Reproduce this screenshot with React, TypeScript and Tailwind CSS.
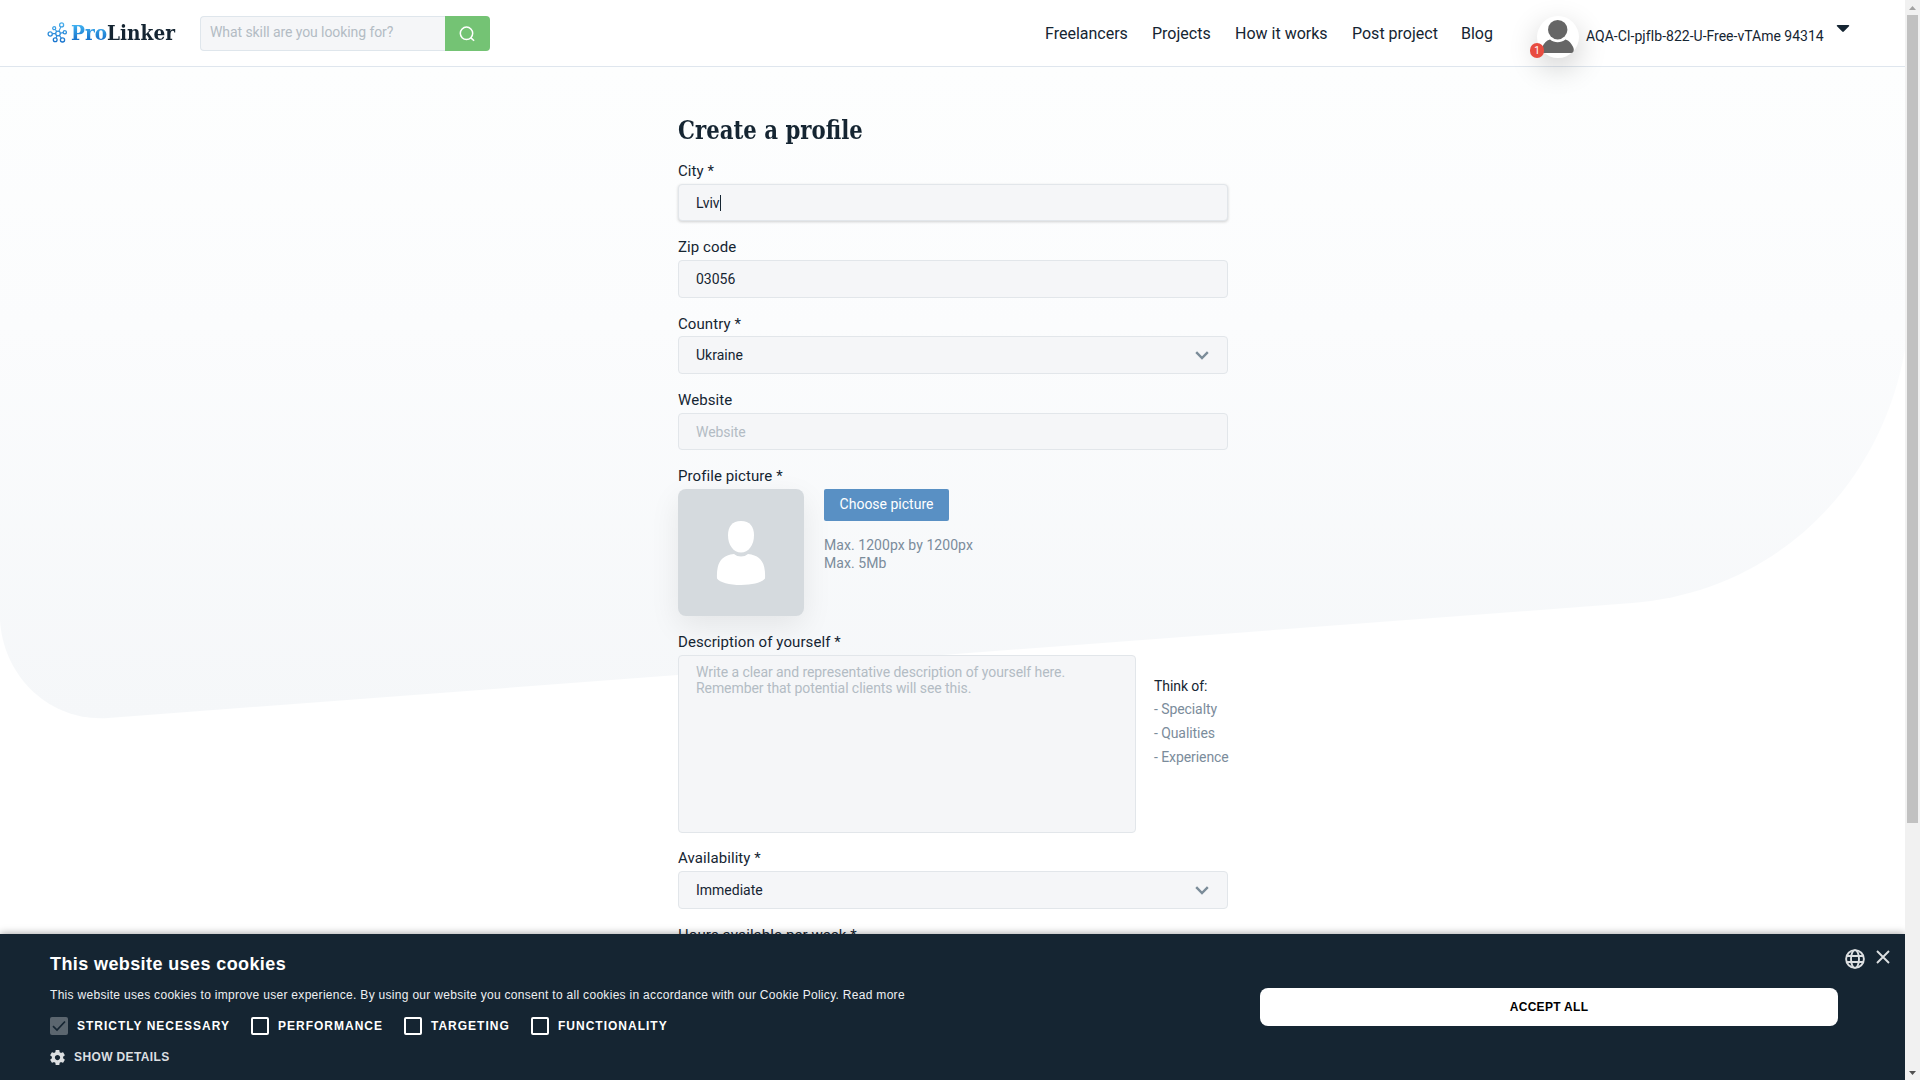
import React from "react";

const label = "text-[15px] leading-[18px] tracking-[0.08px] text-[#152532]";
const box = "flex items-center justify-between rounded border border-[#e2e6ea] bg-[#f5f6f8] w-[550px] px-[17px] text-[14px] leading-[16px]";

function Chevron() {
  return (
    <svg width="14" height="9" viewBox="0 0 14 9" className="mr-px" fill="none" stroke="#7b8c99" strokeWidth="2.4">
      <path d="M1.2 1.2 7 7l5.8-5.8" />
    </svg>
  );
}

function Logo() {
  return (
    <div className="flex items-start">
      <svg width="20" height="21" viewBox="0 0 20 21" fill="none" strokeWidth="1.3" className="mt-[2px]">
        <defs>
          <linearGradient id="node" x1="0" y1="0" x2="0" y2="21" gradientUnits="userSpaceOnUse">
            <stop offset="0" stopColor="#4db2ee" />
            <stop offset="1" stopColor="#1470cc" />
          </linearGradient>
        </defs>
        <g stroke="url(#node)">
          <circle cx="11" cy="11.5" r="2.3" />
          <circle cx="14.6" cy="2.9" r="2" />
          <circle cx="7.2" cy="6.2" r="1.5" />
          <circle cx="3.2" cy="12" r="2.1" />
          <circle cx="17.8" cy="10.3" r="1.6" />
          <circle cx="8.2" cy="17.7" r="1.9" />
          <circle cx="15.5" cy="17.9" r="2.1" />
          <path d="M12 9.100l1.900-4.300M9.700 9.400 8.200 7.500M8.500 11.600H5.300M13.500 11.100l2.700-.5M9.900 13.800l-.9 2.200M12.500 13.600l1.900 2.600" strokeWidth="1.1" />
        </g>
      </svg>
      <span className="ml-[4px] inline-block w-[106px] origin-left scale-x-[0.98] whitespace-nowrap font-['Roboto_Slab','DejaVu_Serif_Condensed','DejaVu_Serif',serif] text-[21px] font-bold leading-[26px]">
        <span className="bg-gradient-to-b from-[#3fb0f0] from-20% to-[#1268c4] to-90% bg-clip-text text-transparent">Pro</span>
        <span className="text-[#152532]">Linker</span>
      </span>
    </div>
  );
}

function Header() {
  return (
    <header className="relative flex h-[67px] w-full items-start border-b border-[#dfe6ee] bg-white pl-[47px]">
      <div className="mt-[20px] w-[153px]"><Logo /></div>
      <div className="mt-[16px] flex h-[35px] w-[290px]">
        <div className="h-[35px] w-[245px] rounded-l border border-r-0 border-[#dfe6ec] bg-[#f5f6f8] pl-[9px] text-[14px] leading-[31px] tracking-[-0.08px] text-[#b3bcc4]">What skill are you looking for?</div>
        <div className="flex w-[45px] items-center justify-center rounded-r bg-[#74c374] pr-[2px]">
          <svg width="16" height="16" viewBox="0 0 16 16" fill="none" stroke="#fff" strokeWidth="1.5"><circle cx="7.5" cy="7.3" r="6.2" /><path d="m11.700 11.600 3.400 3.200" /></svg>
        </div>
      </div>
      <nav className="ml-[555px] mt-[23px] flex text-[16px] leading-[21px] text-[#152532]">
        <a className="w-[107px]">Freelancers</a>
        <a className="w-[83px]">Projects</a>
        <a className="w-[117px]">How it works</a>
        <a className="w-[109px]">Post project</a>
        <a className="w-[76px]">Blog</a>
      </nav>
      <div className="relative mt-[16px] h-[42px] w-[42px] rounded-full bg-white shadow-[0_10px_30px_rgba(0,0,0,0.2)]">
        <svg width="42" height="42" viewBox="0 0 42 42" fill="#666">
          <circle cx="20.700" cy="13.700" r="9.700" />
          <path d="M13 23.500c2.200 1.800 4.800 2.700 7.700 2.700s5.500-.9 7.700-2.700c3.700 1 5.900 3.900 7.700 7.500 1 2.100.7 3.300.4 4.300-.4 1.200-1 1.700-2.200 1.700H7c-1.200 0-1.800-.5-2.200-1.700-.3-1-.6-2.200.4-4.300 1.800-3.600 4-6.500 7.800-7.500z" />
        </svg>
        <span className="absolute -left-[7px] top-[27px] flex h-[15px] w-[14px] items-center justify-center rounded-full bg-[#e84c40] text-[10px] leading-[10px] text-white">1</span>
      </div>
      <span className="ml-[7px] mt-[27px] w-[250px] whitespace-nowrap text-[14px] leading-[19px] text-[#152532]">AQA-CI-pjfIb-822-U-Free-vTAme 94314</span>
      <svg width="14" height="9" viewBox="0 0 14 9" className="mt-[24px]" fill="#152532"><path d="M1.500 1h11c.7 0 1 .8.5 1.300L7.800 7.600c-.5.500-1.100.5-1.600 0L1 2.300C.5 1.800.8 1 1.500 1z" /></svg>
    </header>
  );
}

function Form() {
  return (
    <main className="relative ml-[678px] w-[560px] text-[#152532]">
      <h1 className="mt-[46px] h-[34px] origin-left scale-x-[0.91] whitespace-nowrap font-['Roboto_Slab','DejaVu_Serif_Condensed','DejaVu_Serif',serif] text-[26px] font-bold leading-[34px]">Create a profile</h1>
      <div className={`mt-[15px] ${label}`}>City *</div>
      <div className={`mt-[4px] h-[37px] ${box} shadow-[0_1px_3px_rgba(0,0,0,0.18)]`}><span className="border-r border-[#152532]">Lviv</span></div>
      <div className={`mt-[17px] ${label}`}>Zip code</div>
      <div className={`mt-[4px] h-[38px] ${box}`}>03056</div>
      <div className={`mt-[17px] ${label}`}>Country *</div>
      <div className={`mt-[3px] h-[38px] ${box}`}><span>Ukraine</span><Chevron /></div>
      <div className={`mt-[17px] ${label}`}>Website</div>
      <div className={`mt-[4px] h-[37px] ${box} tracking-[-0.08px] text-[#b3bcc4]`}>Website</div>
      <div className={`mt-[17px] ${label}`}>Profile picture *</div>
      <div className="mt-[4px] flex">
        <div className="flex h-[127px] w-[126px] items-start justify-center rounded-lg bg-[#d5dade] shadow-[0_10px_30px_rgba(0,0,0,0.08)]">
          <svg width="50" height="66" viewBox="0 0 50 66" fill="#fff" className="mt-[31px]">
            <path d="M25 1c9 0 13 5.500 13 14.500C38 25 32.500 32.500 25 32.500s-13-7.500-13-17C12 6.500 16 1 25 1z" />
            <path d="M18 34c2 1.700 4.300 2.500 7 2.500s5-.8 7-2.500c10 1 14.500 6 16.200 13 .9 4 1 8 .8 11.500C46 62.500 37 65 25 65S4 62.500 1 58.500c-.2-3.500-.1-7.500.8-11.500C3.500 40 8 35 18 34z" />
          </svg>
        </div>
        <div className="ml-[20px] text-[14px]">
          <div className="h-[32px] w-[125px] rounded-[2px] bg-[#5990c4] text-center leading-[31px] text-white">Choose picture</div>
          <div className="mt-[15px] leading-[18px] tracking-[0.06px] text-[#7b8c9b]">Max. 1200px by 1200px<br />Max. 5Mb</div>
        </div>
      </div>
      <div className={`mt-[17px] ${label}`}>Description of yourself *</div>
      <div className="mt-[4px] flex text-[14px]">
        <div className="h-[178px] w-[458px] whitespace-nowrap rounded border border-[#e2e6ea] bg-[#f5f6f8] px-[17px] pt-[8px] leading-[16px] tracking-[-0.07px] text-[#b3bcc4]">Write a clear and representative description of yourself here.<br />Remember that potential clients will see this.</div>
        <div className="ml-[18px] mt-[19px] whitespace-nowrap leading-[24px] tracking-[-0.08px] text-[#7b8c9b]"><p className="mb-[-1px] text-[#152532]">Think of:</p><p>- Specialty</p><p>- Qualities</p><p>- Experience</p></div>
      </div>
      <div className={`mt-[16px] ${label}`}>Availability *</div>
      <div className={`mt-[4px] h-[38px] ${box}`}><span>Immediate</span><Chevron /></div>
      <div className={`mt-[17px] ${label}`}>Hours available per week *</div>
    </main>
  );
}

function Check({ text, checked = false, width }: { text: string; checked?: boolean; width: string }) {
  return (
    <div className={`flex items-center ${width}`}>
      {checked ? (
        <span className="flex h-[18px] w-[18px] items-center justify-center rounded-[2px] bg-[#5b666f]">
          <svg width="14" height="12" viewBox="0 0 14 12" fill="none" stroke="#152532" strokeWidth="1.7"><path d="M1 6.200 5 10 13 1.500" /></svg>
        </span>
      ) : (
        <span className="h-[18px] w-[18px] rounded-[2px] border-2 border-white" />
      )}
      <span className="ml-[9px] whitespace-nowrap text-[12px] font-bold leading-[18px] tracking-[1px]">{text}</span>
    </div>
  );
}

function CookieBar() {
  return (
    <section className="absolute bottom-0 left-0 flex h-[146px] w-[1905px] bg-[#152532] pl-[50px] font-['Liberation_Sans',Arial,sans-serif] text-white shadow-[0_0_8px_rgba(0,0,0,0.4)]">
      <div className="w-[1210px]">
        <h2 className="mt-[18px] text-[18px] font-bold leading-[24px] tracking-[0.4px]">This website uses cookies</h2>
        <p className="mt-[10px] whitespace-nowrap text-[12px] leading-[18px] tracking-[0.3px] text-[#eef0f2]">This website uses cookies to improve user experience. By using our website you consent to all cookies in accordance with our Cookie Policy. Read more</p>
        <div className="mt-[13px] flex">
          <Check text="STRICTLY NECESSARY" checked width="w-[201px]" />
          <Check text="PERFORMANCE" width="w-[153px]" />
          <Check text="TARGETING" width="w-[127px]" />
          <Check text="FUNCTIONALITY" width="w-[150px]" />
        </div>
        <div className="mt-[13px] flex items-center text-[#dcdfe1]">
          <svg width="15" height="15" viewBox="2 2 20 20" fill="currentColor"><path d="M19.430 12.980c.04-.32.07-.64.07-.98s-.03-.66-.07-.98l2.110-1.650c.19-.15.240-.42.120-.64l-2-3.460c-.12-.22-.39-.3-.61-.22l-2.490 1c-.52-.4-1.080-.73-1.690-.98l-.38-2.650C14.460 2.180 14.250 2 14 2h-4c-.25 0-.46.180-.49.420l-.38 2.650c-.61.250-1.170.59-1.690.98l-2.490-1c-.23-.09-.49 0-.61.220l-2 3.460c-.13.220-.07.490.12.640l2.110 1.650c-.04.320-.07.650-.07.980s.03.660.07.980l-2.110 1.650c-.19.150-.24.420-.12.640l2 3.460c.12.220.39.300.61.220l2.490-1c.52.400 1.080.730 1.690.980l.38 2.650c.03.240.24.420.49.420h4c.25 0 .46-.18.49-.42l.38-2.650c.61-.25 1.170-.59 1.690-.98l2.490 1c.23.090.49 0 .61-.22l2-3.460c.12-.22.070-.49-.12-.64l-2.110-1.650zM12 15.500c-1.930 0-3.500-1.570-3.500-3.500s1.570-3.500 3.500-3.500 3.500 1.570 3.500 3.500-1.570 3.500-3.500 3.500z" /></svg>
          <span className="ml-[9px] text-[12px] font-bold leading-[18px] tracking-[0.38px]">SHOW DETAILS</span>
        </div>
      </div>
      <button className="mt-[54px] h-[38px] w-[578px] rounded-lg bg-white text-[12px] font-bold tracking-[0.3px] text-black">ACCEPT ALL</button>
      <svg width="20" height="20" viewBox="0 0 20 20" className="ml-[7px] mt-[15px]" fill="none" stroke="#dcdfe1" strokeWidth="1.9"><circle cx="10" cy="10" r="8.9" /><ellipse cx="10" cy="10" rx="4" ry="8.9" /><path d="M1.800 7h16.400M1.800 13h16.400" /></svg>
      <svg width="14" height="14" viewBox="0 0 14 14" className="ml-[11px] mt-[16px]" fill="none" stroke="#dcdfe1" strokeWidth="1.9"><path d="m1 1 12 12M13 1 1 13" /></svg>
    </section>
  );
}

export default function App() {
  return (
    <div className="flex h-[1080px] w-[1920px] overflow-hidden bg-white font-[Roboto,sans-serif]">
      <div className="relative h-[1080px] w-[1905px] overflow-hidden">
        <svg width="1905" height="1080" className="absolute left-0 top-0">
          <defs>
            <linearGradient id="bg" x1="0" y1="67" x2="0" y2="718" gradientUnits="userSpaceOnUse">
              <stop offset="0" stopColor="#fdfefe" />
              <stop offset=".4" stopColor="#fbfcfd" />
              <stop offset="1" stopColor="#f5f7f9" />
            </linearGradient>
          </defs>
          <path d="M0 67H1905V350C1880 490 1772 592 1632 603L108 718C48 722 3 675 0 620Z" fill="url(#bg)" />
        </svg>
        <Header />
        <Form />
        <CookieBar />
      </div>
      <div className="flex h-[1080px] w-[15px] flex-col items-center bg-[#f1f1f1]">
        <svg width="15" height="15" viewBox="0 0 15 15" fill="#a3a3a3"><path d="M4 10h7L7.500 6z" /></svg>
        <div className="h-[808px] w-[11px] bg-[#c1c1c1]" />
        <svg width="15" height="15" viewBox="0 0 15 15" fill="#505050" className="mt-auto"><path d="M4 6h7l-3.500 4z" /></svg>
      </div>
    </div>
  );
}
